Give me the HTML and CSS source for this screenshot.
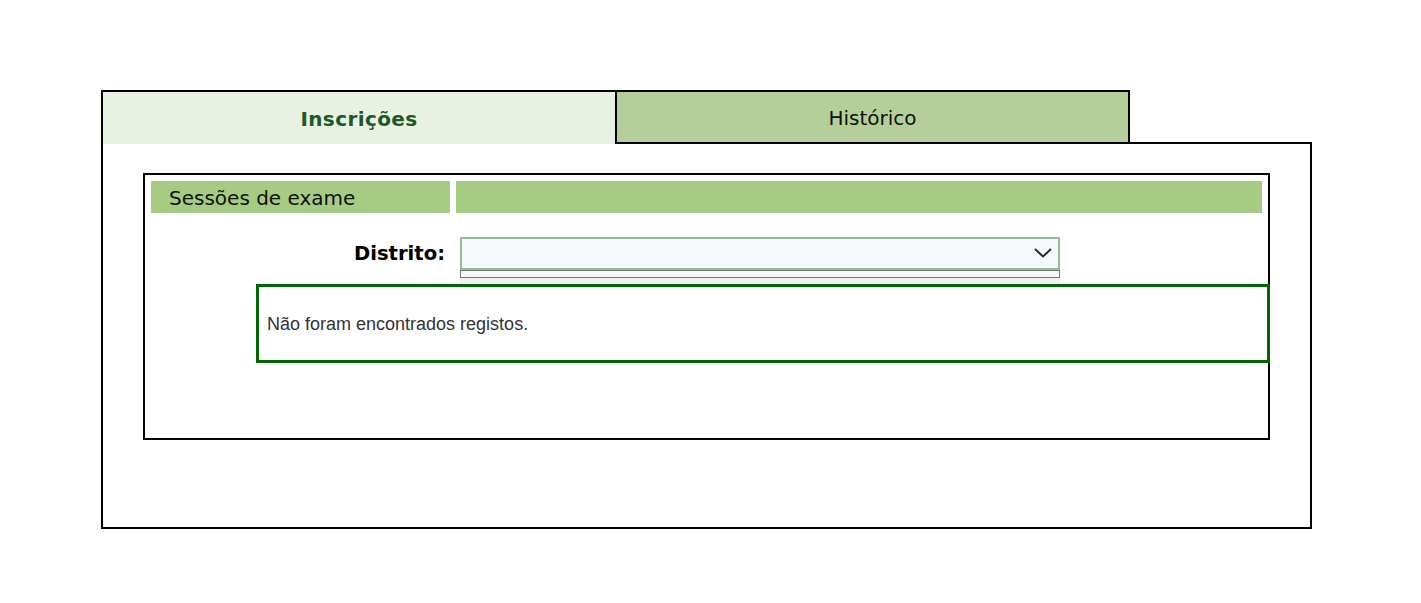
FILE: index.html
```html
<!DOCTYPE html>
<html lang="pt">
<head>
<meta charset="utf-8">
<title>Inscrições</title>
<link rel="stylesheet" href="styles.css">
</head>
<body>
<div class="page">
  <div class="tabbox">
    <div class="tabs">
      <div class="tab tab-active">Inscrições</div>
      <div class="tab tab-other">Histórico</div>
      <div class="tab-filler"></div>
    </div>
    <div class="panel">
      <div class="inner">
        <div class="head-row">
          <div class="head-cell head-title">Sessões de exame</div>
          <div class="head-cell head-fill"></div>
        </div>
        <div class="field-row">
          <div class="field-label">Distrito:</div>
          <div class="field-control">
            <div class="select">
              <svg class="chevron" width="18" height="10" viewBox="0 0 18 10"><polyline points="1,1 9,8.5 17,1" fill="none" stroke="#2b2b2b" stroke-width="2"/></svg>
            </div>
            <div class="listbox"></div>
            <div class="listshade"></div>
          </div>
        </div>
        <div class="results">Não foram encontrados registos.</div>
      </div>
    </div>
  </div>
</div>
</body>
</html>
```
FILE: styles.css
```css
html, body {
  margin: 0;
  padding: 0;
  background: #ffffff;
}
.page {
  padding: 90px 0 0 101px;
}
.tabbox {
  width: 1211px;
  font-family: "DejaVu Sans", Verdana, sans-serif;
}
.tabs {
  display: flex;
  height: 54px;
}
.tab {
  box-sizing: border-box;
  display: flex;
  align-items: center;
  justify-content: center;
  font-size: 20px;
  color: #111;
}
.tab-active {
  width: 514px;
  border-left: 2px solid #000;
  border-top: 2px solid #000;
  background: #e9f1e3;
  color: #195a28;
  font-weight: bold;
  letter-spacing: 0.4px;
  padding-top: 2px;
}
.tab-other {
  width: 515px;
  border: 2px solid #000;
  background: #b5cf9a;
  padding-top: 2px;
}
.tab-filler {
  flex: 1;
  align-self: flex-end;
  border-bottom: 2px solid #000;
  border-right: 2px solid #000;
  height: 0;
}
.panel {
  box-sizing: border-box;
  border: 2px solid #000;
  border-top: none;
  padding: 29px 40px 87px 40px;
}
.inner {
  box-sizing: border-box;
  border: 2px solid #000;
  padding: 6px;
}
.head-row {
  display: flex;
  gap: 6px;
  height: 32px;
}
.head-cell {
  background: #a6cc83;
}
.head-title {
  width: 299px;
  box-sizing: border-box;
  padding-left: 18px;
  padding-top: 1px;
  display: flex;
  align-items: center;
  font-size: 20px;
  color: #111;
}
.head-fill {
  flex: 1;
}
.field-row {
  display: flex;
  margin-top: 24px;
}
.field-label {
  box-sizing: border-box;
  width: 309px;
  padding-right: 15px;
  height: 33px;
  display: flex;
  align-items: center;
  justify-content: flex-end;
  font-weight: bold;
  font-size: 19.6px;
  color: #000;
}
.field-control {
  width: 600px;
}
.select {
  box-sizing: border-box;
  height: 33px;
  border: 2px solid #8fbf8d;
  background: #f7f8fc;
  display: flex;
  align-items: center;
  justify-content: flex-end;
  padding-right: 6px;
  padding-bottom: 1px;
}
.chevron {
  display: block;
}
.listbox {
  box-sizing: border-box;
  height: 8px;
  border: 1px solid #777;
  background: #f7f8fc;
}
.listshade {
  height: 6px;
  background: #f1f1f1;
}
.results {
  box-sizing: border-box;
  width: 1014px;
  margin-left: 105px;
  margin-bottom: 69px;
  border: 3px solid #006400;
  padding: 27px 8px 25px 8px;
  font-family: "Liberation Sans", Arial, sans-serif;
  font-size: 18px;
  color: #333;
  line-height: 21px;
}
```
